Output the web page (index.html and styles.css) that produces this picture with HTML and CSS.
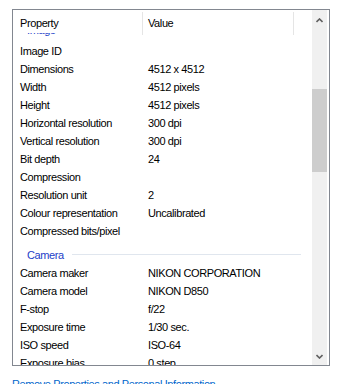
FILE: index.html
```html
<!DOCTYPE html>
<html lang="en">
<head>
    <meta charset="UTF-8">
    <title>Details</title>
    <link rel="stylesheet" href="styles.css">
</head>
<body>
    <div class="panel">
        <div class="view">
            <div class="header">
                <div class="head-cell head-name">Property</div>
                <div class="head-cell head-value">Value</div>
            </div>
            <div class="rows">
                <div class="rows-inner">
                    <div class="group group-first"><span class="group-title">Image</span><span class="group-line"></span></div>
                    <div class="row"><div class="name">Image ID</div><div class="value"></div></div>
                    <div class="row"><div class="name">Dimensions</div><div class="value">4512 x 4512</div></div>
                    <div class="row"><div class="name">Width</div><div class="value">4512 pixels</div></div>
                    <div class="row"><div class="name">Height</div><div class="value">4512 pixels</div></div>
                    <div class="row"><div class="name">Horizontal resolution</div><div class="value">300 dpi</div></div>
                    <div class="row"><div class="name">Vertical resolution</div><div class="value">300 dpi</div></div>
                    <div class="row"><div class="name">Bit depth</div><div class="value">24</div></div>
                    <div class="row"><div class="name">Compression</div><div class="value"></div></div>
                    <div class="row"><div class="name">Resolution unit</div><div class="value">2</div></div>
                    <div class="row"><div class="name">Colour representation</div><div class="value">Uncalibrated</div></div>
                    <div class="row"><div class="name">Compressed bits/pixel</div><div class="value"></div></div>

                    <div class="group"><span class="group-title">Camera</span><span class="group-line"></span></div>
                    <div class="row"><div class="name">Camera maker</div><div class="value">NIKON CORPORATION</div></div>
                    <div class="row"><div class="name">Camera model</div><div class="value">NIKON D850</div></div>
                    <div class="row"><div class="name">F-stop</div><div class="value">f/22</div></div>
                    <div class="row"><div class="name">Exposure time</div><div class="value">1/30 sec.</div></div>
                    <div class="row"><div class="name">ISO speed</div><div class="value">ISO-64</div></div>
                    <div class="row"><div class="name">Exposure bias</div><div class="value">0 step</div></div>
                    <div class="row"><div class="name">Focal length</div><div class="value">50 mm</div></div>
                </div>
            </div>
        </div>
        <div class="scrollbar">
            <div class="sb-btn sb-up">
                <svg width="7" height="5" viewBox="0 0 7 5"><polyline points="0.5,4 3.5,1 6.5,4" fill="none" stroke="#606060" stroke-width="1.6"/></svg>
            </div>
            <div class="sb-track"><div class="sb-thumb"></div></div>
            <div class="sb-btn sb-down">
                <svg width="7" height="5" viewBox="0 0 7 5"><polyline points="0.5,1 3.5,4 6.5,1" fill="none" stroke="#606060" stroke-width="1.6"/></svg>
            </div>
        </div>
    </div>

    <a class="link" href="#">Remove Properties and Personal Information</a>
</body>
</html>
```

FILE: styles.css
```css
body {
    margin: 0;
    background: #ffffff;
    font-family: 'Liberation Sans', Arial, sans-serif;
    font-size: 11px;
    letter-spacing: -0.4px;
    color: #000000;
    overflow: hidden;
}
.panel {
    display: flex;
    box-sizing: border-box;
    width: 318px;
    height: 357px;
    margin: 9px 0 0 12px;
    border: 1px solid #828790;
    background: white;
}
.view {
    width: 299px;
    display: flex;
    flex-direction: column;
    overflow: hidden;
}
.header {
    display: flex;
    flex: none;
    height: 23px;
    position: relative;
    z-index: 1;
    background: white;
}
.head-cell {
    box-sizing: border-box;
    height: 23px;
    margin-top: 2px;
    padding-top: 2px;
    line-height: 18px;
    border-right: 1px solid #e5e5e5;
}
.head-name {
    width: 130px;
    padding-left: 7px;
}
.head-value {
    width: 151px;
    padding-left: 5px;
}
.rows {
    flex: 1;
    overflow: hidden;
}
.rows-inner {
    margin-top: -15px;
}
.row {
    display: grid;
    grid-template-columns: 130px 1fr;
    height: 18px;
    line-height: 18px;
    white-space: nowrap;
}
.name {
    padding-left: 7px;
    overflow: hidden;
}
.value {
    padding-left: 5px;
}
.group {
    box-sizing: border-box;
    height: 24px;
    padding: 5px 11px 0 14px;
    display: flex;
    align-items: center;
}
.group-first {
    padding-top: 2px;
    padding-bottom: 3px;
}
.group-title {
    line-height: 18px;
    color: #1d40c8;
}
.group-line {
    flex: 1;
    height: 1px;
    margin-left: 8px;
    background: #e0e6ee;
}
.scrollbar {
    width: 15px;
    margin-right: 2px;
    background: #f0f0f0;
    display: flex;
    flex-direction: column;
}
.sb-btn {
    display: flex;
    align-items: center;
    justify-content: center;
    flex: none;
}
.sb-up {
    height: 20px;
}
.sb-down {
    height: 17px;
}
.sb-track {
    flex: 1;
}
.sb-thumb {
    margin-top: 59px;
    height: 83px;
    background: #cdcdcd;
}
.link {
    display: block;
    margin-top: 9px;
    padding-left: 12px;
    line-height: 18px;
    color: #0066cc;
    text-decoration: none;
}
```
